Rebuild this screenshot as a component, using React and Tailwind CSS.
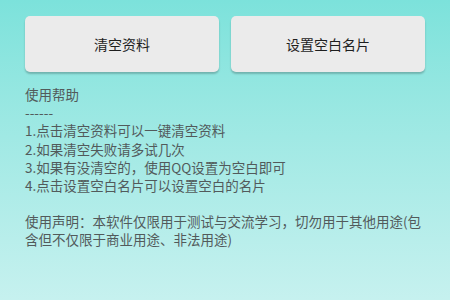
import React from 'react';

const FONT = { fontFamily: '"Noto Sans CJK SC", Roboto, "Noto Sans", sans-serif' };

const HELP = [
  '使用帮助',
  '------',
  '1.点击清空资料可以一键清空资料',
  '2.如果清空失败请多试几次',
  '3.如果有没清空的，使用QQ设置为空白即可',
  '4.点击设置空白名片可以设置空白的名片',
];

function ActionButton({ children }) {
  return (
    <button
      type="button"
      className="flex-1 h-14 rounded-[5px] bg-[#ebebeb] text-[14px] text-[#1e1e1e] shadow-[0_2px_2px_rgba(0,0,0,0.22)]"
    >
      {children}
    </button>
  );
}

export default function App() {
  return (
    <div
      style={FONT}
      className="w-[450px] h-[300px] overflow-hidden bg-gradient-to-b from-[#7ce2db] to-[#c6f1ef] px-[25px] pt-4"
    >
      <div className="flex gap-3">
        <ActionButton>清空资料</ActionButton>
        <ActionButton>设置空白名片</ActionButton>
      </div>

      <div className="mt-[13px] text-[13.5px] leading-[18.2px] text-[#525a5b]">
        {HELP.map((line) => (
          <div key={line}>{line}</div>
        ))}
        <div className="h-[18px]" />
        <div>使用声明：本软件仅限用于测试与交流学习，切勿用于其他用途(包含但不仅限于商业用途、非法用途)</div>
      </div>
    </div>
  );
}
